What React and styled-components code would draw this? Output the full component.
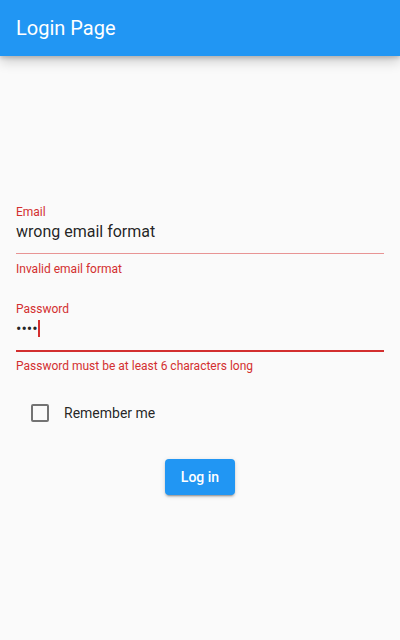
import React, { useState } from "react";
import styled, { createGlobalStyle } from "styled-components";

const palette = {
  primary: "#2196f3",
  error: "#d32f2f",
  errorSoft: "#e89494",
  page: "#fafafa",
  text: "rgba(0, 0, 0, 0.87)",
  checkbox: "rgba(0, 0, 0, 0.54)",
};

const GlobalStyle = createGlobalStyle`
  html, body {
    margin: 0;
    padding: 0;
    background: ${palette.page};
    font-family: Roboto, "Noto Sans", sans-serif;
  }
  * {
    box-sizing: border-box;
  }
`;

const Page = styled.div`
  min-height: 640px;
  background: ${palette.page};
  display: flex;
  flex-direction: column;
`;

const AppBar = styled.header`
  height: 56px;
  padding: 0 16px;
  display: flex;
  align-items: center;
  background: ${palette.primary};
  color: #fff;
  font-size: 20px;
  font-weight: 400;
  box-shadow: 0 2px 4px rgba(0, 0, 0, 0.16), 0 5px 12px rgba(0, 0, 0, 0.2);
  position: relative;
  z-index: 1;
`;

const Form = styled.main`
  padding: 148px 16px 0;
  display: flex;
  flex-direction: column;
`;

const Field = styled.div`
  display: flex;
  flex-direction: column;
  margin-top: ${(p) => (p.$first ? 0 : 24)}px;
`;

const Label = styled.div`
  font-size: 12px;
  line-height: 16px;
  color: ${palette.error};
`;

const Value = styled.div`
  font-size: 16px;
  line-height: 24px;
  padding-bottom: 9px;
  color: ${palette.text};
  border-bottom: ${(p) => (p.$focused ? `2px solid ${palette.error}` : `1px solid ${palette.errorSoft}`)};
  white-space: nowrap;
`;

const Cursor = styled.span`
  display: inline-block;
  width: 2px;
  height: 17px;
  vertical-align: -3px;
  background: ${palette.error};
`;

const ErrorText = styled.div`
  font-size: 12px;
  line-height: 16px;
  color: ${palette.error};
  margin-top: ${(p) => (p.$focused ? 6 : 7)}px;
`;

const CheckRow = styled.label`
  display: flex;
  align-items: center;
  height: 48px;
  margin-top: 15px;
  cursor: pointer;
`;

const CheckTarget = styled.span`
  width: 48px;
  height: 48px;
  display: flex;
  align-items: center;
  justify-content: center;
`;

const Box = styled.span`
  width: 18px;
  height: 18px;
  border: 2px solid ${(p) => (p.$checked ? palette.primary : palette.checkbox)};
  background: ${(p) => (p.$checked ? palette.primary : "transparent")};
  border-radius: 2px;
`;

const CheckText = styled.span`
  font-size: 14px;
  line-height: 20px;
  color: ${palette.text};
`;

const ButtonRow = styled.div`
  display: flex;
  justify-content: center;
  margin-top: 22px;
`;

const Button = styled.button`
  height: 36px;
  padding: 0 16px;
  border: none;
  border-radius: 4px;
  background: ${palette.primary};
  color: #fff;
  font-family: Roboto, "Noto Sans", sans-serif;
  font-size: 14px;
  font-weight: 500;
  cursor: pointer;
  box-shadow: 0 3px 1px -2px rgba(0, 0, 0, 0.2), 0 2px 2px 0 rgba(0, 0, 0, 0.14),
    0 1px 5px 0 rgba(0, 0, 0, 0.12);
`;

const App = () => {
  const [remember, setRemember] = useState(false);

  return (
    <Page>
      <GlobalStyle />
      <AppBar>Login Page</AppBar>
      <Form>
        <Field $first>
          <Label>Email</Label>
          <Value>wrong email format</Value>
          <ErrorText>Invalid email format</ErrorText>
        </Field>

        <Field>
          <Label>Password</Label>
          <Value $focused>
            {"\u2022\u2022\u2022\u2022"}
            <Cursor />
          </Value>
          <ErrorText $focused>Password must be at least 6 characters long</ErrorText>
        </Field>

        <CheckRow onClick={() => setRemember(!remember)}>
          <CheckTarget>
            <Box $checked={remember} />
          </CheckTarget>
          <CheckText>Remember me</CheckText>
        </CheckRow>

        <ButtonRow>
          <Button>Log in</Button>
        </ButtonRow>
      </Form>
    </Page>
  );
};

export default App;
